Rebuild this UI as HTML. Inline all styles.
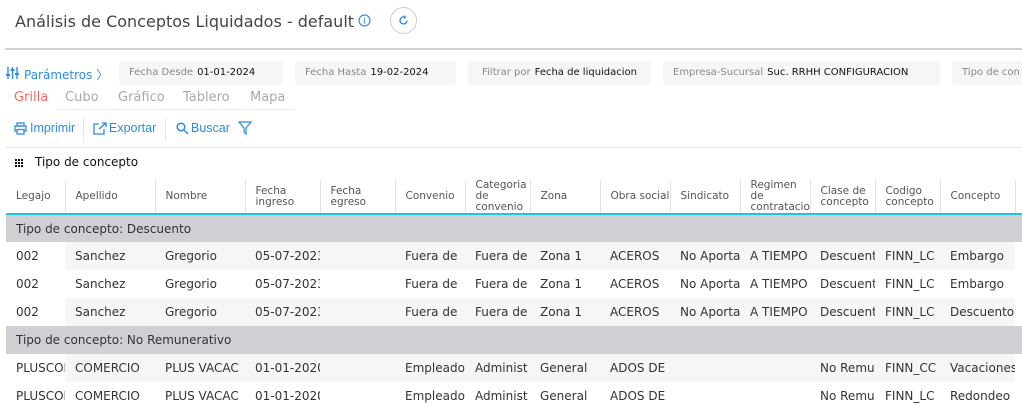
<!DOCTYPE html>
<html><head><meta charset="utf-8"><style>
*{box-sizing:border-box;margin:0;padding:0}
body{width:1022px;height:403px;overflow:hidden;background:#fff;font-family:"DejaVu Sans","Liberation Sans",sans-serif;color:#333;position:relative}
.a{position:absolute;white-space:nowrap}
.title{left:15px;top:12px;font-size:16px;color:#444}
.pill{position:absolute;top:61px;height:24px;background:#f6f6f6;border-radius:4px;font-size:10px;line-height:24px;padding-left:10px;color:#888;white-space:nowrap;overflow:hidden}
.pill b{font-weight:normal;color:#111;margin-left:4px}
.tab{top:90px;font-size:13px;color:#aaa}
.tb{top:121px;font-family:"Liberation Sans",sans-serif;font-size:12.5px;color:#2f8be0}
svg{position:absolute}
table{position:absolute;left:6px;top:180px;width:1029px;border-collapse:collapse;table-layout:fixed;font-size:12px}
td{height:28px;padding-left:10px;white-space:nowrap;overflow:hidden;color:#333}
th{height:33px;font-weight:normal;text-align:left;padding-left:10px;font-size:10.5px;line-height:11px;color:#555;border-right:1px solid #e4e4e4;border-bottom:2px solid #22c1e8;background:#fff;overflow:hidden;white-space:normal;vertical-align:middle}
tr.g td{background:#cfd0d3;color:#333}
tr.s td{background:#f6f6f6}
tr.s td:first-child{background:#fff}
</style></head><body>
<div class="a title">Análisis de Conceptos Liquidados - default</div>
<svg style="left:358px;top:14px" width="13" height="13" viewBox="0 0 13 13"><circle cx="6.5" cy="6.5" r="5.5" fill="none" stroke="#3a8ee6" stroke-width="1.2"/><rect x="5.9" y="5.5" width="1.2" height="4" fill="#3a8ee6"/><rect x="5.9" y="3.3" width="1.2" height="1.2" fill="#3a8ee6"/></svg>
<div class="a" style="left:390px;top:7px;width:27px;height:27px;border:1px solid #ccc;border-radius:50%"></div>
<svg style="left:397px;top:14px" width="13" height="13" viewBox="0 0 13 13"><path d="M10 6.5A3.5 3.5 0 1 1 7.5 3.1" fill="none" stroke="#3a8ee6" stroke-width="1.4"/><path d="M7 1l2.5 2.2L7 5z" fill="#3a8ee6"/></svg>
<div class="a" style="left:5px;top:48px;width:1017px;height:2px;background:#d2d2d6"></div>
<svg style="left:6px;top:66px" width="13" height="14" viewBox="0 0 13 14"><g stroke="#2f8be0" stroke-width="1.4"><path d="M2 1v12M6.5 1v12M11 1v12"/></g><g fill="#2f8be0"><rect x="0" y="8" width="4" height="2"/><rect x="4.5" y="3" width="4" height="2"/><rect x="9" y="7" width="4" height="2"/></g></svg>
<div class="a" style="left:24px;top:66px;font-size:12px;color:#2f8be0">Parámetros 〉</div>
<div class="pill" style="left:119px;width:164px">Fecha Desde<b>01-01-2024</b></div>
<div class="pill" style="left:295px;width:161px">Fecha Hasta<b>19-02-2024</b></div>
<div class="pill" style="left:468px;width:183px;padding-left:14px">Filtrar por<b>Fecha de liquidacion</b></div>
<div class="pill" style="left:663px;width:277px">Empresa-Sucursal<b>Suc. RRHH CONFIGURACION</b></div>
<div class="pill" style="left:952px;width:80px">Tipo de con</div>
<div class="a tab" style="left:14px;color:#f06a6a">Grilla</div>
<div class="a tab" style="left:65px">Cubo</div>
<div class="a tab" style="left:118px">Gráfico</div>
<div class="a tab" style="left:183px">Tablero</div>
<div class="a tab" style="left:250px">Mapa</div>
<div class="a" style="left:56px;top:109px;width:239px;height:1px;background:#eee"></div>
<svg style="left:14px;top:122px" width="13" height="13" viewBox="0 0 13 13"><g fill="none" stroke="#2f8be0" stroke-width="1.3"><rect x="3" y="1" width="7" height="3"/><rect x="1" y="4" width="11" height="5"/><rect x="3" y="7.5" width="7" height="4.5" fill="#fff"/></g></svg>
<div class="a tb" style="left:30px">Imprimir</div>
<div class="a" style="left:83px;top:118px;width:1px;height:25px;background:#e6e6e6"></div>
<svg style="left:93px;top:122px" width="14" height="13" viewBox="0 0 14 13"><g fill="none" stroke="#2f8be0" stroke-width="1.3"><path d="M6 2H1v10h10V7"/><path d="M6 7l7-6M9 1h4v4"/></g></svg>
<div class="a tb" style="left:109px">Exportar</div>
<div class="a" style="left:165px;top:118px;width:1px;height:23px;background:#e6e6e6"></div>
<svg style="left:176px;top:122px" width="13" height="13" viewBox="0 0 13 13"><g fill="none" stroke="#2f8be0" stroke-width="1.5"><circle cx="5" cy="5" r="3.8"/><path d="M8 8l4 4"/></g></svg>
<div class="a tb" style="left:191px">Buscar</div>
<svg style="left:238px;top:121px" width="14" height="15" viewBox="0 0 14 15"><path d="M1 1h12L8 7v6l-2-2V7z" fill="none" stroke="#2f8be0" stroke-width="1.2"/></svg>
<div class="a" style="left:5px;top:147px;width:1017px;height:1px;background:#e8e8e8"></div>
<svg style="left:15px;top:159px" width="8" height="8" viewBox="0 0 8 8" fill="#111"><rect x="0" y="0" width="2" height="2"/><rect x="3" y="0" width="2" height="2"/><rect x="6" y="0" width="2" height="2"/><rect x="0" y="3" width="2" height="2"/><rect x="3" y="3" width="2" height="2"/><rect x="6" y="3" width="2" height="2"/><rect x="0" y="6" width="2" height="2"/><rect x="3" y="6" width="2" height="2"/><rect x="6" y="6" width="2" height="2"/></svg>
<div class="a" style="left:35px;top:155px;font-size:12px;color:#111">Tipo de concepto</div>
<table>
<colgroup><col style="width:59px"><col style="width:90px"><col style="width:90px"><col style="width:75px"><col style="width:75px"><col style="width:70px"><col style="width:65px"><col style="width:70px"><col style="width:70px"><col style="width:70px"><col style="width:70px"><col style="width:65px"><col style="width:65px"><col style="width:75px"><col style="width:20px"></colgroup>
<tr><th>Legajo</th><th>Apellido</th><th>Nombre</th><th>Fecha ingreso</th><th>Fecha egreso</th><th>Convenio</th><th>Categoria de convenio</th><th>Zona</th><th>Obra social</th><th>Sindicato</th><th>Regimen de contratacion</th><th>Clase de concepto</th><th>Codigo concepto</th><th>Concepto</th><th></th></tr>
<tr class="g"><td colspan="15">Tipo de concepto: Descuento</td></tr>
<tr class="s"><td>002</td><td>Sanchez</td><td>Gregorio</td><td>05-07-2023</td><td></td><td>Fuera de</td><td>Fuera de</td><td>Zona 1</td><td>ACEROS</td><td>No Aporta</td><td>A TIEMPO</td><td>Descuento</td><td>FINN_LC</td><td>Embargo</td><td style="background:#fff"></td></tr>
<tr><td>002</td><td>Sanchez</td><td>Gregorio</td><td>05-07-2023</td><td></td><td>Fuera de</td><td>Fuera de</td><td>Zona 1</td><td>ACEROS</td><td>No Aporta</td><td>A TIEMPO</td><td>Descuento</td><td>FINN_LC</td><td>Embargo</td><td></td></tr>
<tr class="s"><td>002</td><td>Sanchez</td><td>Gregorio</td><td>05-07-2023</td><td></td><td>Fuera de</td><td>Fuera de</td><td>Zona 1</td><td>ACEROS</td><td>No Aporta</td><td>A TIEMPO</td><td>Descuento</td><td>FINN_LC</td><td>Descuento</td><td style="background:#fff"></td></tr>
<tr class="g"><td colspan="15">Tipo de concepto: No Remunerativo</td></tr>
<tr class="s"><td>PLUSCOM</td><td>COMERCIO</td><td>PLUS VACAC</td><td>01-01-2020</td><td></td><td>Empleado</td><td>Administ</td><td>General</td><td>ADOS DE</td><td></td><td></td><td>No Remun</td><td>FINN_CC</td><td>Vacaciones</td><td style="background:#fff"></td></tr>
<tr><td>PLUSCOM</td><td>COMERCIO</td><td>PLUS VACAC</td><td>01-01-2020</td><td></td><td>Empleado</td><td>Administ</td><td>General</td><td>ADOS DE</td><td></td><td></td><td>No Remun</td><td>FINN_LC</td><td>Redondeo</td><td></td></tr>
</table>
</body></html>
